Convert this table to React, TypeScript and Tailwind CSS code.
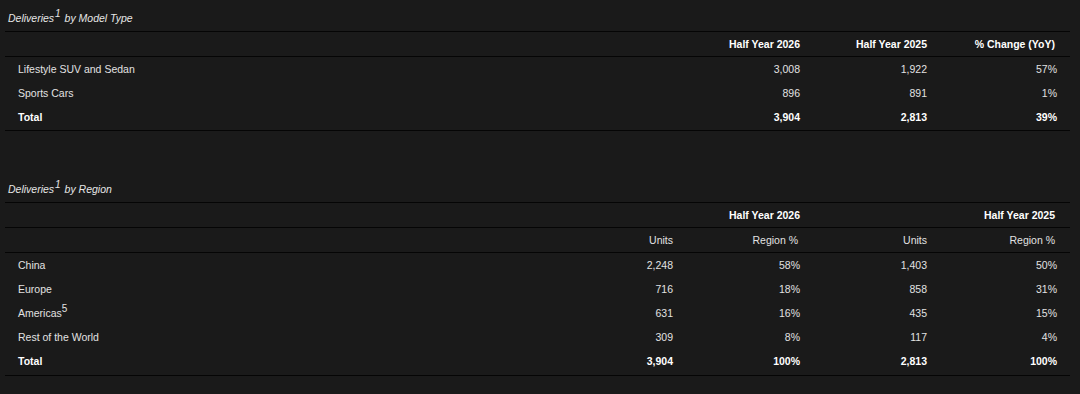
import React from "react";

const font = { fontFamily: '"Liberation Sans", Arial, sans-serif' };

function Title({ text }: { text: string }) {
  return (
    <div className="pl-[8px] pt-[11px] pb-[6px] text-[10.5px] leading-[14px] italic text-[#e6e6e6]">
      Deliveries<sup className="text-[10px] -top-[5px] ml-[1px] mr-[1px]">1</sup> {text}
    </div>
  );
}

const row = "h-[24px] items-center pt-[1px] px-[13px] text-[10.5px] text-[#e2e2e2]";
const headRow = "h-[25px] items-center pt-[1px] px-[13px] text-[10.5px] border-b border-[#050505]";

export default function App() {
  const models = [
    { name: "Lifestyle SUV and Sedan", a: "3,008", b: "1,922", c: "57%" },
    { name: "Sports Cars", a: "896", b: "891", c: "1%" },
  ];

  const regions = [
    { name: "China", u1: "2,248", p1: "58%", u2: "1,403", p2: "50%" },
    { name: "Europe", u1: "716", p1: "18%", u2: "858", p2: "31%" },
    { name: "Americas", sup: "5", u1: "631", p1: "16%", u2: "435", p2: "15%" },
    { name: "Rest of the World", u1: "309", p1: "8%", u2: "117", p2: "4%" },
  ];

  const cols1 = "grid grid-cols-[1fr_127px_127px_130px]";
  const cols2 = "grid grid-cols-[1fr_128px_127px_127px_130px]";

  return (
    <div className="min-h-[394px] w-full bg-[#1a1a1a]" style={font}>
      {/* Model type table */}
      <Title text="by Model Type" />
      <div className="ml-[5px] mr-[10px] pb-[1px] border-t border-b border-[#050505]">
        <div className={`${cols1} ${headRow} font-bold text-white`}>
          <span />
          <span className="text-right">Half Year 2026</span>
          <span className="text-right">Half Year 2025</span>
          <span className="text-right pr-[2px]">% Change (YoY)</span>
        </div>
        {models.map((m) => (
          <div key={m.name} className={`${cols1} ${row}`}>
            <span>{m.name}</span>
            <span className="text-right">{m.a}</span>
            <span className="text-right">{m.b}</span>
            <span className="text-right">{m.c}</span>
          </div>
        ))}
        <div className={`${cols1} ${row} font-bold text-white`}>
          <span>Total</span>
          <span className="text-right">3,904</span>
          <span className="text-right">2,813</span>
          <span className="text-right">39%</span>
        </div>
      </div>

      <div className="h-[40px]" />

      {/* Region table */}
      <Title text="by Region" />
      <div className="ml-[5px] mr-[10px] pb-[2px] border-t border-b border-[#050505]">
        <div className={`${cols2} ${headRow} font-bold text-white`}>
          <span />
          <span />
          <span className="text-right">Half Year 2026</span>
          <span />
          <span className="text-right pr-[2px]">Half Year 2025</span>
        </div>
        <div className={`${cols2} ${headRow} text-[#e2e2e2]`}>
          <span />
          <span className="text-right">Units</span>
          <span className="text-right pr-[2px]">Region %</span>
          <span className="text-right">Units</span>
          <span className="text-right pr-[2px]">Region %</span>
        </div>
        {regions.map((r) => (
          <div key={r.name} className={`${cols2} ${row}`}>
            <span>
              {r.name}
              {r.sup && <sup className="text-[10px] -top-[5px]">{r.sup}</sup>}
            </span>
            <span className="text-right">{r.u1}</span>
            <span className="text-right">{r.p1}</span>
            <span className="text-right">{r.u2}</span>
            <span className="text-right">{r.p2}</span>
          </div>
        ))}
        <div className={`${cols2} ${row} font-bold text-white`}>
          <span>Total</span>
          <span className="text-right">3,904</span>
          <span className="text-right">100%</span>
          <span className="text-right">2,813</span>
          <span className="text-right">100%</span>
        </div>
      </div>
    </div>
  );
}
